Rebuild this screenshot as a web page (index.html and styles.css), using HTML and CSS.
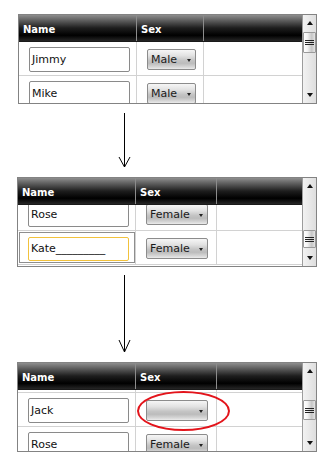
FILE: index.html
```html
<!DOCTYPE html>
<html>
<head>
<meta charset="utf-8">
<link rel="stylesheet" href="styles.css">
</head>
<body>
<div class="page">

  <div class="grid grid--first">
    <div class="grid__main">
      <div class="hdr cols-male">
        <div class="hcell">Name</div><div class="hcell">Sex</div><div class="hcell"></div>
      </div>
      <div class="body">
        <div class="rows">
          <div class="row cols-male">
            <div class="cell cell--name"><div class="tb">Jimmy</div></div>
            <div class="cell cell--sex"><div class="combo combo--male"><span>Male</span><i class="caret"></i></div></div>
            <div class="cell"></div>
          </div>
          <div class="row cols-male">
            <div class="cell cell--name"><div class="tb">Mike</div></div>
            <div class="cell cell--sex"><div class="combo combo--male"><span>Male</span><i class="caret"></i></div></div>
            <div class="cell"></div>
          </div>
        </div>
      </div>
    </div>
    <div class="sb">
      <div class="sb__btn"><i class="sb__up"></i></div>
      <div class="sb__track"><div class="thumb thumb--top"><div class="grip"></div></div></div>
      <div class="sb__btn"><i class="sb__down"></i></div>
    </div>
  </div>

  <div class="arrow arrow--short">
    <svg width="15" height="73" viewBox="0 0 15 73"><line x1="7.5" y1="9" x2="7.5" y2="63" stroke="#000" stroke-width="1"/><polyline points="2,53 7.5,63 13,53" fill="none" stroke="#000" stroke-width="1"/></svg>
  </div>

  <div class="grid">
    <div class="grid__main">
      <div class="hdr cols-female">
        <div class="hcell">Name</div><div class="hcell">Sex</div><div class="hcell"></div>
      </div>
      <div class="body">
        <div class="rows rows--scroll8">
          <div class="row cols-female">
            <div class="cell cell--name"><div class="tb">Rose</div></div>
            <div class="cell cell--sex"><div class="combo combo--female"><span>Female</span><i class="caret"></i></div></div>
            <div class="cell"></div>
          </div>
          <div class="row cols-female">
            <div class="cell cell--name cell--focused"><div class="tb tb--editing">Kate_________</div></div>
            <div class="cell cell--sex"><div class="combo combo--female"><span>Female</span><i class="caret"></i></div></div>
            <div class="cell"></div>
          </div>
        </div>
      </div>
    </div>
    <div class="sb">
      <div class="sb__btn"><i class="sb__up"></i></div>
      <div class="sb__track"><div class="thumb thumb--bottom"><div class="grip"></div></div></div>
      <div class="sb__btn"><i class="sb__down"></i></div>
    </div>
  </div>

  <div class="arrow arrow--long">
    <svg width="15" height="95" viewBox="0 0 15 95"><line x1="7.5" y1="8" x2="7.5" y2="85" stroke="#000" stroke-width="1"/><polyline points="2,73 7.5,85 13,73" fill="none" stroke="#000" stroke-width="1"/></svg>
  </div>

  <div class="grid">
    <div class="grid__main">
      <div class="hdr cols-female">
        <div class="hcell">Name</div><div class="hcell">Sex</div><div class="hcell"></div>
      </div>
      <div class="body">
        <div class="rows rows--scroll31">
          <div class="row cols-female">
            <div class="cell cell--name"></div>
            <div class="cell cell--sex"></div>
            <div class="cell"></div>
          </div>
          <div class="row cols-female">
            <div class="cell cell--name"><div class="tb">Jack</div></div>
            <div class="cell cell--sex"><div class="combo combo--female"><span></span><i class="caret"></i></div></div>
            <div class="cell"></div>
          </div>
          <div class="row cols-female">
            <div class="cell cell--name"><div class="tb">Rose</div></div>
            <div class="cell cell--sex"><div class="combo combo--female"><span>Female</span><i class="caret"></i></div></div>
            <div class="cell"></div>
          </div>
        </div>
      </div>
    </div>
    <div class="sb">
      <div class="sb__btn"><i class="sb__up"></i></div>
      <div class="sb__track"><div class="thumb thumb--mid"><div class="grip"></div></div></div>
      <div class="sb__btn"><i class="sb__down"></i></div>
    </div>
    <div class="annot"></div>
  </div>

</div>
</body>
</html>
```
FILE: styles.css
```css
body {
  margin: 0;
  background: #fff;
  font-family: "DejaVu Sans", Verdana, sans-serif;
  color: #111;
}
.page {
  padding: 14px 0 0 17px;
}
.grid {
  position: relative;
  display: flex;
  width: 300px;
  height: 90px;
  box-sizing: border-box;
  border: 1px solid #838383;
}
.grid--first {
  margin-left: 1px;
  width: 299px;
}
.grid__main {
  flex: 1;
  min-width: 0;
  display: flex;
  flex-direction: column;
}
.hdr {
  display: grid;
  height: 27px;
  flex: none;
  box-sizing: border-box;
  border-bottom: 1px solid #1a1a1a;
  background: linear-gradient(#8e8e8e 0%, #5c5c5c 22%, #1e1e1e 50%, #000 78%, #262626 100%);
}
.cols-male { grid-template-columns: 118px 67px 1fr; }
.cols-female { grid-template-columns: 118px 81px 1fr; }
.hcell {
  border-right: 1px solid #8c8c8c;
  color: #fff;
  font-weight: bold;
  font-size: 10px;
  padding: 3px 0 0 4px;
  display: flex;
  align-items: center;
}
.hcell:last-child { border-right: none; }
.body {
  flex: 1;
  overflow: hidden;
}
.rows--scroll8 { margin-top: -8px; }
.rows--scroll31 { margin-top: -31px; }
.row {
  display: grid;
  height: 34px;
  box-sizing: border-box;
  border-bottom: 1px solid #d2d2d2;
}
.cell {
  border-right: 1px solid #d2d2d2;
  display: flex;
  align-items: center;
  padding-top: 2px;
  min-width: 0;
}
.cell:last-child { border-right: none; }
.cell--name { padding-left: 10px; }
.cell--sex { padding-left: 10px; }
.cell--focused {
  outline: 1px solid #8e8e8e;
  outline-offset: -2px;
}
.tb {
  width: 101px;
  height: 25px;
  box-sizing: border-box;
  border: 1px solid #8a8a8a;
  border-radius: 2px;
  background: #fff;
  padding: 0 2px;
  font-size: 11px;
  line-height: 23px;
  white-space: nowrap;
  overflow: hidden;
}
.tb--editing {
  height: 24px;
  line-height: 22px;
  border-color: #f2c23c;
}
.combo {
  height: 21px;
  box-sizing: border-box;
  border: 1px solid #8c8c8c;
  border-radius: 2px;
  background: linear-gradient(#f6f6f6 0%, #e2e2e2 30%, #c4c4c4 55%, #bcbcbc 70%, #d8d8d8 90%, #ececec 100%);
  display: flex;
  align-items: center;
  justify-content: space-between;
  padding: 0 4px 0 3px;
  font-size: 11px;
  color: #1a1a1a;
}
.combo--male { width: 49px; }
.combo--female { width: 62px; }
.caret {
  width: 0;
  height: 0;
  border-left: 2.5px solid transparent;
  border-right: 2.5px solid transparent;
  border-top: 3px solid #222;
  margin-top: 1px;
}
.sb {
  width: 14px;
  flex: none;
  box-sizing: border-box;
  border-left: 1px solid #9c9c9c;
  background: linear-gradient(to right, #f2f2f2, #e6e6e6 60%, #dedede);
  display: flex;
  flex-direction: column;
}
.sb__btn {
  height: 16px;
  flex: none;
  display: flex;
  align-items: center;
  justify-content: center;
}
.sb__up {
  width: 0;
  height: 0;
  border-left: 3.5px solid transparent;
  border-right: 3.5px solid transparent;
  border-bottom: 4px solid #111;
}
.sb__down {
  width: 0;
  height: 0;
  border-left: 3.5px solid transparent;
  border-right: 3.5px solid transparent;
  border-top: 4px solid #111;
}
.sb__track {
  flex: 1;
}
.thumb {
  box-sizing: border-box;
  border: 1px solid #9a9a9a;
  border-radius: 1px;
  background: linear-gradient(to right, #ffffff 0%, #f4f4f4 30%, #c6c6c6 70%, #e4e4e4 100%);
  display: flex;
  align-items: center;
  justify-content: center;
}
.thumb--top { margin-top: 1px; height: 21px; }
.thumb--bottom { margin-top: 36px; height: 18px; }
.thumb--mid { margin-top: 21px; height: 20px; }
.grip {
  width: 9px;
  height: 5px;
  background: repeating-linear-gradient(#222 0 1px, transparent 1px 2px);
}
.arrow {
  padding-left: 100px;
}
.arrow svg { display: block; }
.arrow--short { height: 73px; }
.arrow--long { height: 95px; }
.annot {
  position: absolute;
  left: 119px;
  top: 28px;
  width: 93px;
  height: 40px;
  box-sizing: border-box;
  border: 2px solid #e3141b;
  border-radius: 50%;
}
```
